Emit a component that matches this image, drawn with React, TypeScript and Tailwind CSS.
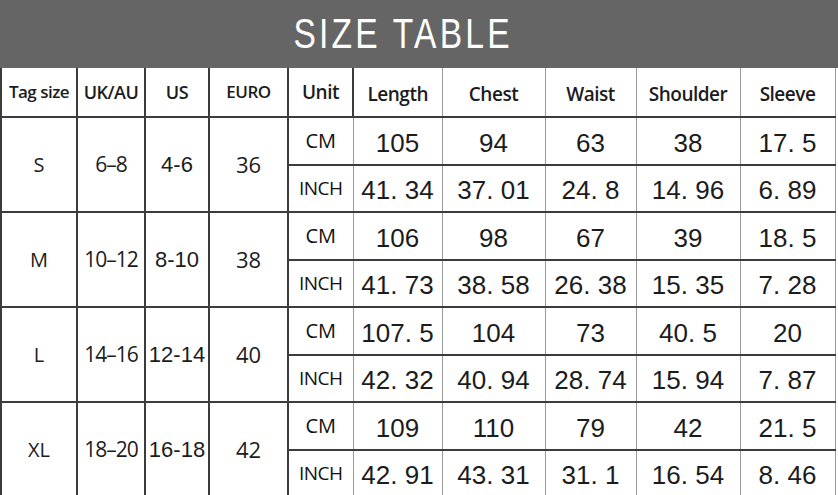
import React from "react";

type Row = {
  tag: string;
  uk: string;
  us: string;
  euro: string;
  cm: string[];
  inch: string[];
};

const rows: Row[] = [
  { tag: "S", uk: "6–8", us: "4-6", euro: "36", cm: ["105", "94", "63", "38", "17. 5"], inch: ["41. 34", "37. 01", "24. 8", "14. 96", "6. 89"] },
  { tag: "M", uk: "10–12", us: "8-10", euro: "38", cm: ["106", "98", "67", "39", "18. 5"], inch: ["41. 73", "38. 58", "26. 38", "15. 35", "7. 28"] },
  { tag: "L", uk: "14–16", us: "12-14", euro: "40", cm: ["107. 5", "104", "73", "40. 5", "20"], inch: ["42. 32", "40. 94", "28. 74", "15. 94", "7. 87"] },
  { tag: "XL", uk: "18–20", us: "16-18", euro: "42", cm: ["109", "110", "79", "42", "21. 5"], inch: ["42. 91", "43. 31", "31. 1", "16. 54", "8. 46"] },
];

const heads = ["Length", "Chest", "Waist", "Shoulder", "Sleeve"];

const labelFont = "font-['Open_Sans','Noto_Sans',sans-serif]";
const numFont = "font-['Liberation_Sans',Arial,sans-serif]";

// dark lines on the left block, lighter on the measurement columns
const leftCell = "border-2 border-[#3c3c3c] text-center align-middle p-0";
const rightCell = "border-y-2 border-y-[#3c3c3c] border-x border-x-[#9a9a9a] text-center align-middle p-0";

export default function App() {
  return (
    <div className="w-[838px] h-[495px] overflow-hidden bg-white">
      {/* Title band */}
      <div className="h-[68px] bg-[#656565] flex items-center justify-center pr-8">
        <h1 className="text-white text-[42px] leading-none tracking-[4px] scale-x-[0.8] font-['Liberation_Sans',Arial,sans-serif] font-normal">
          SIZE TABLE
        </h1>
      </div>

      <table className="w-[834px] table-fixed border-collapse text-[#1c1c1c]">
        <colgroup>
          <col className="w-[76px]" />
          <col className="w-[68px]" />
          <col className="w-[64px]" />
          <col className="w-[79px]" />
          <col className="w-[65px]" />
          <col className="w-[89px]" />
          <col className="w-[103px]" />
          <col className="w-[91px]" />
          <col className="w-[104px]" />
          <col className="w-[95px]" />
        </colgroup>
        <thead>
          <tr className={`h-[49px] ${labelFont} font-semibold tracking-[-0.5px]`}>
            <th className={`${leftCell} border-t-0 text-[17px] font-semibold`}>Tag size</th>
            <th className={`${leftCell} border-t-0 text-[18px] font-semibold`}>UK/AU</th>
            <th className={`${leftCell} border-t-0 text-[18px] font-semibold`}>US</th>
            <th className={`${leftCell} border-t-0 text-[17px] font-semibold`}>EURO</th>
            <th className={`${leftCell} border-t-0 text-[19px] font-semibold`}>Unit</th>
            {heads.map((h) => (
              <th key={h} className={`${rightCell} border-t-0 text-[19px] font-semibold pt-1`}>
                {h}
              </th>
            ))}
          </tr>
        </thead>
        <tbody>
          {rows.map((r) => (
            <React.Fragment key={r.tag}>
              <tr className="h-[48px]">
                <td rowSpan={2} className={`${leftCell} ${labelFont} text-[20px]`}>
                  {r.tag}
                </td>
                <td rowSpan={2} className={`${leftCell} ${labelFont} text-[21px] tracking-[-1px]`}>
                  {r.uk}
                </td>
                <td rowSpan={2} className={`${leftCell} ${numFont} text-[22px]`}>
                  {r.us}
                </td>
                <td rowSpan={2} className={`${leftCell} ${labelFont} text-[22px]`}>
                  {r.euro}
                </td>
                <td className={`${leftCell} border-r border-r-[#9a9a9a] ${labelFont} text-[20px] text-[#111]`}>CM</td>
                {r.cm.map((v, i) => (
                  <td key={i} className={`${rightCell} ${numFont} text-[26px] whitespace-pre pt-1`}>
                    {v}
                  </td>
                ))}
              </tr>
              <tr className="h-[47px]">
                <td className={`${leftCell} border-r border-r-[#9a9a9a] ${labelFont} text-[19px] text-[#111] tracking-[-0.5px]`}>INCH</td>
                {r.inch.map((v, i) => (
                  <td key={i} className={`${rightCell} ${numFont} text-[26px] whitespace-pre pt-1`}>
                    {v}
                  </td>
                ))}
              </tr>
            </React.Fragment>
          ))}
        </tbody>
      </table>
    </div>
  );
}
